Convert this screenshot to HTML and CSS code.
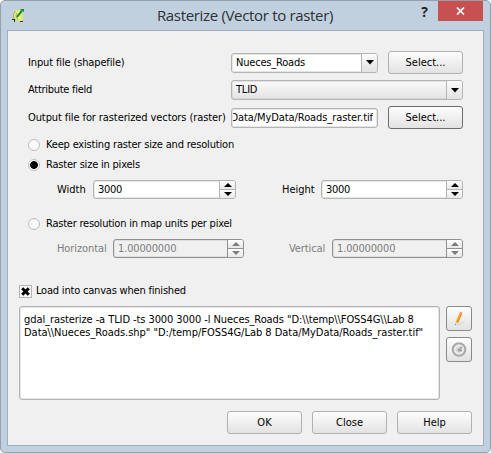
FILE: index.html
```html
<!DOCTYPE html>
<html lang="en">
<head>
<meta charset="utf-8">
<title>Rasterize (Vector to raster)</title>
<link rel="stylesheet" href="styles.css">
</head>
<body>
<div class="window">
  <header class="titlebar">
    <svg class="logo" width="14" height="16" viewBox="0 0 14 16">
      <path d="M1.500 6 L3.500 2.500 L7 2 L11 6 L11 12 L8 14 L4 12.500 L2 10Z" fill="#dcec6c"/>
      <path d="M3.500 3 L1.500 6 V10 L4 12.500 M5 5 L4 8 L6 12" stroke="#a0ad68" fill="none" stroke-width=".9"/>
      <path d="M7 3 L6 8 L9 12" stroke="#f6f9b8" fill="none" stroke-width="1.300"/>
      <path d="M5 9 L10 2.500" stroke="#138a25" stroke-width="2"/>
      <path d="M8 1 H12 V4Z" fill="#138a25"/>
      <path d="M0 11.500 H3 M2.500 11 V14 M8 13.500 H11" stroke="#26301e"/>
    </svg>
    <h1 class="title">Rasterize (Vector to raster)</h1>
    <span class="help-mark">?</span>
    <span class="close"><svg width="9" height="8" viewBox="0 0 9 8"><path d="M1 .5 L8 7.500 M8 .5 L1 7.500" stroke="#fff" stroke-width="1.700"/></svg></span>
  </header>
  <main class="client">
    <div class="row row-input">
      <label class="field-label t-input">Input file (shapefile)</label>
      <div class="box combo"><span class="value t-nueces">Nueces_Roads</span><span class="drop"><svg width="8" height="5"><path d="M0 0H8L4 4.500Z"/></svg></span></div>
      <button class="btn select">Select...</button>
    </div>
    <div class="row row-attr">
      <label class="field-label t-attr">Attribute field</label>
      <div class="box combo wide"><span class="value">TLID</span><span class="drop"><svg width="8" height="5"><path d="M0 0H8L4 4.500Z"/></svg></span></div>
    </div>
    <div class="row row-output">
      <label class="field-label t-output">Output file for rasterized vectors (raster)</label>
      <div class="box path"><div class="clip"><span class="t-path">Data/MyData/Roads_raster.tif</span></div></div>
      <button class="btn select focused">Select...</button>
    </div>
    <div class="row radio-row first"><i class="radio"></i><span class="t-keep">Keep existing raster size and resolution</span></div>
    <div class="row radio-row"><i class="radio on"></i><span class="t-size">Raster size in pixels</span></div>
    <div class="row spins size">
      <label class="spin-label">Width</label>
      <div class="box spin"><span class="value">3000</span><span class="steps"><i><svg width="8" height="4"><path d="M0 4H8L4 0Z"/></svg></i><i><svg width="8" height="4"><path d="M0 0H8L4 4Z"/></svg></i></span></div>
      <label class="spin-label right">Height</label>
      <div class="box spin second"><span class="value">3000</span><span class="steps"><i><svg width="8" height="4"><path d="M0 4H8L4 0Z"/></svg></i><i><svg width="8" height="4"><path d="M0 0H8L4 4Z"/></svg></i></span></div>
    </div>
    <div class="row radio-row third"><i class="radio"></i><span class="t-res">Raster resolution in map units per pixel</span></div>
    <div class="row spins disabled">
      <label class="spin-label">Horizontal</label>
      <div class="box spin"><span class="value">1.00000000</span><span class="steps"><i><svg width="8" height="4"><path d="M0 4H8L4 0Z"/></svg></i><i><svg width="8" height="4"><path d="M0 0H8L4 4Z"/></svg></i></span></div>
      <label class="spin-label right">Vertical</label>
      <div class="box spin"><span class="value">1.00000000</span><span class="steps"><i><svg width="8" height="4"><path d="M0 4H8L4 0Z"/></svg></i><i><svg width="8" height="4"><path d="M0 0H8L4 4Z"/></svg></i></span></div>
    </div>
    <div class="row check-row"><i class="check"><svg width="9" height="9" viewBox="0 0 9 9"><path d="M1.200 1.200L7.800 7.800M7.800 1.200L1.200 7.800" stroke="#000" stroke-width="3"/></svg></i><span class="t-load">Load into canvas when finished</span></div>
    <div class="row command">
      <div class="box output"><div class="t-cmd1">gdal_rasterize -a TLID -ts 3000 3000 -l Nueces_Roads "D:\\temp\\FOSS4G\\Lab 8</div><div class="t-cmd2">Data\\Nueces_Roads.shp" "D:/temp/FOSS4G/Lab 8 Data/MyData/Roads_raster.tif"</div></div>
      <div class="tools">
        <button class="btn tool"><svg width="16" height="16" viewBox="0 0 16 16"><path d="M5 14 L14 9.500 L12 12 L7 14.500Z" fill="#d5d8e2"/><path d="M4.500 11 L8.500 2 L11 3 L7 12.200Z" fill="#f9b233"/><path d="M7 12.200 L11 3 L10 2.500 L5.900 11.500Z" fill="#ea8a13"/><path d="M8.500 2 L9 .8 L11.600 1.800 L11 3Z" fill="#ef8d78"/><path d="M4.500 11 L4 14 L7 12.200Z" fill="#eed6ad"/><path d="M4 14 L4.200 12.700 L5.200 13.300Z" fill="#444"/></svg></button>
        <button class="btn tool"><svg width="16" height="16" viewBox="0 0 16 16"><circle cx="8" cy="7.500" r="6.300" fill="#e2e2e2" stroke="#a9a9a9" stroke-width="2"/><circle cx="8" cy="7.500" r="4" fill="#d6d6d6" stroke="#f4f4f4"/><path d="M7 8.500 L11 5 M7 8.500 H11" stroke="#999" fill="none" stroke-width="1.300"/></svg></button>
      </div>
    </div>
    <footer class="row actions"><button class="btn">OK</button><button class="btn">Close</button><button class="btn">Help</button></footer>
  </main>
</div>
</body>
</html>
```
FILE: styles.css
```css
* { box-sizing: border-box; }
body { margin: 0; background: #fff; }
.window {
  width: 491px; height: 453px; padding: 0 7px 7px 6px;
  background: #c1d0df; border: 1px solid #969fae; border-radius: 5px;
  font: 11px/14px "DejaVu Sans Condensed", "DejaVu Sans", sans-serif;
  color: #000; overflow: hidden;
}
.titlebar { display: flex; height: 29px; align-items: flex-start; }
.logo { margin: 7px 0 0 5px; }
.title {
  width: 178px; margin: 4px 0 0 131px; color: #2d3035; white-space: nowrap;
  font: 15px/20px "Open Sans", sans-serif; letter-spacing: -.33px;
}
.help-mark { margin: 1px 0 0 87px; width: 12px; font: bold 14px/19px "Open Sans", sans-serif; color: #222; }
.close { display: flex; width: 45px; height: 20px; margin-left: 5px; background: #c75050; align-items: center; justify-content: center; }
.client { width: 477px; height: 416px; border: 1px solid #a0aebd; background: #f0f0f0; padding: 20px 11px 0 11px; }
.row { display: flex; align-items: center; white-space: nowrap; }
.row-input, .row-output { height: 23px; }
.row-input, .row-attr, .row-output { padding-left: 9px; }
.field-label { width: 203px; }
.box { display: flex; border: 1px solid #b4b4b4; border-radius: 3px; background: #fff; box-shadow: inset 0 0 0 .5px #ccc; overflow: hidden; }
.combo { width: 147px; height: 20px; }
.value { flex: 1; padding-left: 4px; line-height: 18px; letter-spacing: -.2px; }
.drop { display: flex; width: 16px; border-left: 1px solid #b4b4b4; background: linear-gradient(#fbfbfb, #e2e2e2); align-items: center; justify-content: center; }
.wide { width: 232px; background: linear-gradient(#fafafa, #e3e3e3); }
.row-attr { height: 20px; margin-top: 6px; }
.row-output { margin-top: 6px; }
.btn {
  display: flex; width: 75px; height: 23px; padding: 0; align-items: center; justify-content: center;
  border: 1px solid #b1b1b1; border-radius: 3px; background: linear-gradient(#fdfdfd, #e2e2e2);
  font: inherit; color: #000;
}
.select { margin-left: 10px; }
.focused { border-color: #6d6d6d; }
.path { width: 147px; height: 20px; padding: 0 4px 0 1px; line-height: 18px; }
.clip { display: flex; flex: 1; justify-content: flex-end; overflow: hidden; }
.radio-row { height: 20px; padding-left: 9px; gap: 6px; }
.radio-row.first { margin-top: 6px; }
.radio-row.third { margin-top: 15px; }
.radio { width: 12px; height: 12px; border: 1px solid #bcbcbc; border-radius: 50%; background: #fafafa; }
.radio.on { background: radial-gradient(circle, #000 0 3.500px, #fafafa 4.300px); }
.spins { height: 19px; padding-left: 38px; }
.size { margin-top: 5px; }
.spin-label { width: 36px; }
.spin { width: 143px; height: 19px; }
.spin .value { line-height: 17px; letter-spacing: -.3px; }
.steps { width: 16px; display: grid; grid-template-rows: 8px 9px; border-left: 1px solid #b4b4b4; }
.steps i { display: flex; align-items: center; justify-content: center; background: linear-gradient(#fdfdfd, #e8e8e8); }
.steps i + i { border-top: 1px solid #b4b4b4; }
.right { margin-left: 46px; width: 39px; }
.second { width: 142px; }
.disabled { margin-top: 5px; color: #7d7d7d; }
.disabled .spin-label { width: 56px; letter-spacing: -.1px; }
.disabled .right { width: 43px; margin-left: 45px; }
.disabled .spin { width: 131px; border-color: #919191; background: #f0f0f0; }
.disabled .spin .value { letter-spacing: -.15px; }
.disabled .steps, .disabled .steps i { border-color: #919191; }
.disabled path { fill: #7d7d7d; }
.check-row { height: 14px; margin-top: 26px; gap: 4px; }
.check { display: flex; width: 13px; height: 13px; border: 1px solid #b4b4b4; background: #fafafa; align-items: center; justify-content: center; }
.command { margin-top: 8px; align-items: flex-start; gap: 6px; }
.output { display: block; width: 421px; height: 94px; padding: 6px 4px; line-height: 13px; }
.tools { display: grid; gap: 6px; }
.tool { width: 26px; height: 25px; border-color: #8a8a8a; }
.actions { margin-top: 11px; justify-content: flex-end; gap: 10px; }
.t-input { letter-spacing: -.14px; }
.t-attr { letter-spacing: -.28px; }
.t-output { letter-spacing: -.1px; }
.t-path { letter-spacing: -.08px; }
.t-keep { letter-spacing: -.18px; }
.t-size { letter-spacing: -.2px; }
.t-res { letter-spacing: -.23px; }
.t-load { letter-spacing: -.2px; }
.t-cmd1 { letter-spacing: -.08px; }
.t-cmd2 { letter-spacing: -.03px; }
```
